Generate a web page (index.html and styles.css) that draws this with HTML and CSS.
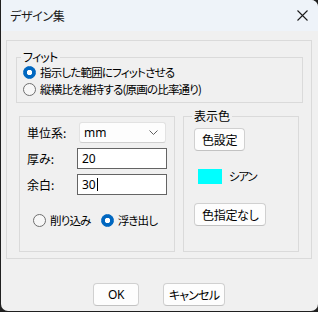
FILE: index.html
```html
<!DOCTYPE html>
<html lang="ja">
<head>
    <meta charset="UTF-8">
    <title>デザイン集</title>
    <link rel="stylesheet" href="styles.css">
</head>
<body>
    <div class="window">
        <div class="titlebar">
            <span class="title">デザイン集</span>
            <span class="close">
                <svg width="11" height="11" viewBox="0 0 11 11"><path d="M0.5 0.5 L10.5 10.5 M10.5 0.5 L0.5 10.5" stroke="#1b1b1b" stroke-width="1.1" fill="none"/></svg>
            </span>
        </div>
        <div class="dialog">
            <div class="frame">
                <fieldset class="group fit">
                    <legend>フィット</legend>
                    <label class="radio"><input type="radio" name="fit" checked>指示した範囲にフィットさせる</label>
                    <label class="radio"><input type="radio" name="fit">縦横比を維持する(原画の比率通り)</label>
                </fieldset>
                <div class="columns">
                    <div class="group params">
                        <div class="fields">
                            <span class="label">単位系:</span>
                            <div class="select">
                                <span>mm</span>
                                <svg width="9" height="5" viewBox="0 0 9 5"><path d="M0.5 0.5 L4.5 4.5 L8.5 0.5" stroke="#606060" stroke-width="1" fill="none"/></svg>
                            </div>
                            <span class="label">厚み:</span>
                            <input class="edit" type="text" value="20">
                            <span class="label">余白:</span>
                            <div class="edit">30<span class="caret"></span></div>
                        </div>
                        <div class="relief">
                            <label class="radio"><input type="radio" name="relief">削り込み</label>
                            <label class="radio"><input type="radio" name="relief" checked>浮き出し</label>
                        </div>
                    </div>
                    <fieldset class="group colors">
                        <legend>表示色</legend>
                        <button class="btn" type="button">色設定</button>
                        <div class="swatch-row"><span class="swatch"></span><span class="swatch-name">シアン</span></div>
                        <button class="btn" type="button">色指定なし</button>
                    </fieldset>
                </div>
            </div>
            <div class="actions">
                <button class="btn ok" type="button">OK</button>
                <button class="btn cancel" type="button">キャンセル</button>
            </div>
        </div>
    </div>
</body>
</html>
```

FILE: styles.css
```css
body {
    margin: 0;
    background: #202020;
    font-family: "Noto Sans CJK JP", "Noto Sans", sans-serif;
    font-feature-settings: "palt";
    font-size: 12px;
    color: #000000;
}

.window {
    margin-left: 1px;
    width: 317px;
    height: 311px;
    background: #f0f0f0;
    border-radius: 0 7px 7px 7px;
    overflow: hidden;
}

.titlebar {
    height: 31px;
    background: #eef3f9;
    display: flex;
    align-items: center;
    justify-content: space-between;
    padding: 0 10px 0 9px;
}

.title {
    font-size: 12px;
    line-height: 14px;
    letter-spacing: -0.3px;
    color: #1a1a1a;
}

.close svg {
    display: block;
}

.dialog {
    padding: 9px 6px 0 5px;
}

.frame {
    box-sizing: border-box;
    height: 219px;
    border: 1px solid #dadada;
    padding: 9px 8px 0 9px;
}

.group {
    margin: 0;
    min-width: 0;
    border: 1px solid #dadada;
}

fieldset.group legend {
    padding: 0 2px;
    margin-left: -2px;
    line-height: 14px;
}

.fit legend {
    letter-spacing: -0.8px;
}

.fit {
    padding: 0 6px 4px 6px;
}

.radio {
    display: flex;
    align-items: center;
    gap: 4px;
    height: 17px;
    line-height: 17px;
    font-size: 11.5px;
    letter-spacing: -0.8px;
    white-space: nowrap;
}

.radio input {
    appearance: none;
    -webkit-appearance: none;
    margin: 0;
    width: 13px;
    height: 13px;
    border: 1px solid #6f6f6f;
    border-radius: 50%;
    background: #f7f7f7;
    box-sizing: border-box;
    flex-shrink: 0;
}

.radio input:checked {
    border-color: #0067c0;
    background: radial-gradient(circle, #ffffff 2.4px, #0067c0 3px);
}

.columns {
    display: flex;
    align-items: flex-start;
    gap: 8px;
    margin: 6px 4px 0 3px;
}

.params {
    box-sizing: border-box;
    width: 156px;
    height: 136px;
    margin-top: 7px;
    padding: 5px 7px 0 7px;
}

.fields {
    display: grid;
    grid-template-columns: 50px 1fr;
    grid-auto-rows: 21px;
    row-gap: 5px;
    align-items: center;
}

.label {
    line-height: 14px;
}

.select {
    box-sizing: border-box;
    height: 21px;
    margin: 0 1px 0 2px;
    padding: 0 7px 0 4px;
    display: flex;
    align-items: center;
    justify-content: space-between;
    background: #fdfdfd;
    border: 1px solid #e2e2e2;
    border-bottom-color: #cfcfcf;
    border-radius: 3px;
    font-family: "Noto Sans", sans-serif;
    font-size: 12px;
}

.edit {
    box-sizing: border-box;
    width: 100%;
    height: 21px;
    margin: 0;
    padding: 0 4px;
    border: 1px solid #646464;
    border-radius: 0;
    background: #ffffff;
    font-family: "Noto Sans", sans-serif;
    font-size: 12px;
    line-height: 19px;
    color: #000000;
    outline: none;
}

.caret {
    display: inline-block;
    width: 1px;
    height: 13px;
    margin-left: 1px;
    vertical-align: -2px;
    background: #000000;
}

.relief {
    display: flex;
    gap: 10px;
    margin: 17px 0 0 6px;
}

.colors {
    box-sizing: border-box;
    width: 116px;
    height: 143px;
    padding: 0 8px 0 10px;
    display: flex;
    flex-direction: column;
    align-items: flex-start;
}

.btn {
    box-sizing: border-box;
    height: 23px;
    padding: 0 7px;
    background: #fdfdfd;
    border: 1px solid #d0d0d0;
    border-bottom-color: #c2c2c2;
    border-radius: 4px;
    font-family: inherit;
    font-feature-settings: "palt";
    font-size: 12px;
    line-height: 20px;
    letter-spacing: -0.3px;
    color: #000000;
}

.colors .btn:first-of-type {
    margin-top: 5px;
}

.swatch-row {
    display: flex;
    align-items: center;
    gap: 7px;
    margin: 18px 0 0 4px;
    line-height: 15px;
}

.swatch {
    width: 24px;
    height: 15px;
    background: #00ffff;
}

.swatch-name {
    font-size: 11.5px;
    letter-spacing: -1.2px;
}

.swatch-row + .btn {
    margin-top: 19px;
}

.actions {
    display: flex;
    justify-content: center;
    gap: 24px;
    margin-top: 24px;
}

.actions .ok {
    width: 46px;
    font-family: "Noto Sans", sans-serif;
}

.actions .cancel {
    width: 62px;
    padding: 0;
    letter-spacing: -0.8px;
}
```
